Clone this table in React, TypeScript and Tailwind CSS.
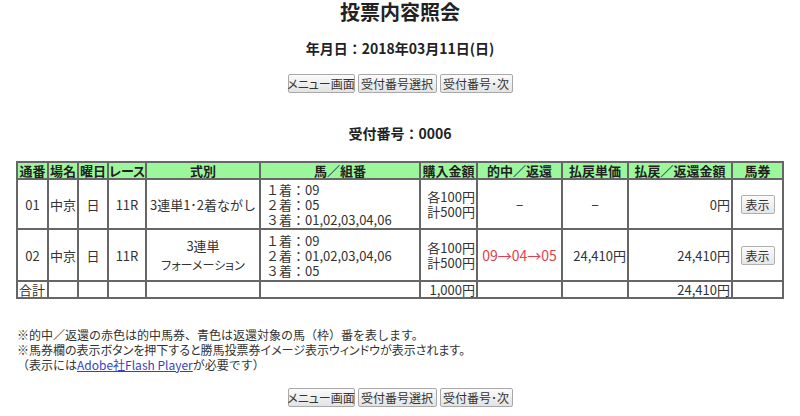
import React from "react";

const font = { fontFamily: '"Noto Sans CJK JP", "Noto Sans", sans-serif' };

function Btn({ children, w }: { children: React.ReactNode; w: string }) {
  return (
    <button
      className={`${w} h-[19px] border border-[#a9a9a9] rounded-[2px] bg-gradient-to-b from-[#fbfbfb] to-[#e3e3e3] text-[12px] leading-[17px] text-[#333] px-0 flex items-center justify-center whitespace-nowrap [font-feature-settings:'palt']`}
    >
      {children}
    </button>
  );
}

function BtnRow() {
  return (
    <div className="flex justify-center gap-[3px]">
      <Btn w="w-[67px]">メニュー画面</Btn>
      <Btn w="w-[79px]">受付番号選択</Btn>
      <Btn w="w-[73px]">受付番号･次</Btn>
    </div>
  );
}

const th = "border border-[#666] bg-[#9cf79c] text-[13px] font-bold leading-[15px] text-[#222] p-0 text-center whitespace-nowrap";
const td = "border border-[#666] text-[13px] leading-[15px] text-[#333] align-middle whitespace-nowrap";

function ShowBtn() {
  return (
    <button className="w-[34px] h-[19px] mx-auto border border-[#b0b0b0] rounded-[2px] bg-gradient-to-b from-[#fbfbfb] to-[#e6e6e6] text-[12px] leading-[17px] text-[#333] flex items-center justify-center">
      表示
    </button>
  );
}

export default function App() {
  return (
    <div className="w-[800px] h-[416px] bg-white text-[#222] overflow-hidden" style={font}>
      <div className="text-center text-[20px] font-bold leading-[24px] pt-0">投票内容照会</div>
      <div className="text-center text-[14px] font-bold leading-[18px] mt-[15px]">年月日：2018年03月11日(日)</div>
      <div className="mt-[17px]">
        <BtnRow />
      </div>
      <div className="text-center text-[14px] font-bold leading-[18px] mt-[31px]">受付番号：0006</div>
      <table className="mx-auto mt-[19px] w-[766px] table-fixed border-separate border-spacing-0 border border-[#666]">
        <colgroup>
          <col className="w-[31px]" />
          <col className="w-[30px]" />
          <col className="w-[30px]" />
          <col className="w-[38px]" />
          <col className="w-[114px]" />
          <col className="w-[160px]" />
          <col className="w-[57px]" />
          <col className="w-[85px]" />
          <col className="w-[66px]" />
          <col className="w-[104px]" />
          <col className="w-[51px]" />
        </colgroup>
        <thead>
          <tr className="h-[17px]">
            <th className={th}>通番</th>
            <th className={th}>場名</th>
            <th className={th}>曜日</th>
            <th className={`${th} [font-feature-settings:'palt']`}>レース</th>
            <th className={th}>式別</th>
            <th className={th}>馬／組番</th>
            <th className={th}>購入金額</th>
            <th className={th}>的中／返還</th>
            <th className={th}>払戻単価</th>
            <th className={th}>払戻／返還金額</th>
            <th className={th}>馬券</th>
          </tr>
        </thead>
        <tbody>
          <tr className="h-[50px]">
            <td className={`${td} text-center`}>01</td>
            <td className={`${td} pl-[1px]`}>中京</td>
            <td className={`${td} text-center`}>日</td>
            <td className={`${td} text-center`}>11R</td>
            <td className={`${td} text-center`}>3連単1･2着ながし</td>
            <td className={`${td} pl-[5px]`}>
              <div>１着：09</div>
              <div>２着：05</div>
              <div>３着：01,02,03,04,06</div>
            </td>
            <td className={`${td} text-right pr-[1px]`}>
              <div>各100円</div>
              <div>計500円</div>
            </td>
            <td className={`${td} text-center`}>−</td>
            <td className={`${td} text-center`}>−</td>
            <td className={`${td} text-right pr-[1px]`}>0円</td>
            <td className={`${td} text-center`}>
              <ShowBtn />
            </td>
          </tr>
          <tr className="h-[52px]">
            <td className={`${td} text-center`}>02</td>
            <td className={`${td} pl-[1px]`}>中京</td>
            <td className={`${td} text-center`}>日</td>
            <td className={`${td} text-center`}>11R</td>
            <td className={`${td} text-center`}>
              <div className="leading-[19px]">3連単</div>
              <div className="leading-[19px] text-[12px] [font-feature-settings:'palt']">フォーメーション</div>
            </td>
            <td className={`${td} pl-[5px]`}>
              <div>１着：09</div>
              <div>２着：01,02,03,04,06</div>
              <div>３着：05</div>
            </td>
            <td className={`${td} text-right pr-[1px]`}>
              <div>各100円</div>
              <div>計500円</div>
            </td>
            <td className={`${td} text-center text-[14px] text-[#e23e4c]`}>09→04→05</td>
            <td className={`${td} text-right pr-[1px] text-[13.5px]`}>24,410円</td>
            <td className={`${td} text-right pr-[1px] text-[13.5px]`}>24,410円</td>
            <td className={`${td} text-center`}>
              <ShowBtn />
            </td>
          </tr>
          <tr className="h-[16px]">
            <td className={`${td} pl-[1px]`}>合計</td>
            <td className={td}></td>
            <td className={td}></td>
            <td className={td}></td>
            <td className={td}></td>
            <td className={td}></td>
            <td className={`${td} text-right pr-[1px]`}>1,000円</td>
            <td className={td}></td>
            <td className={td}></td>
            <td className={`${td} text-right pr-[1px] text-[13.5px]`}>24,410円</td>
            <td className={td}></td>
          </tr>
        </tbody>
      </table>
      <div className="ml-[17px] mt-[28px] text-[12px] leading-[15px] text-[#333]">
        <div>※的中／返還の赤色は的中馬券、青色は返還対象の馬（枠）番を表します。</div>
        <div className="[font-feature-settings:'palt']">※馬券欄の表示ボタンを押下すると勝馬投票券イメージ表示ウィンドウが表示されます。</div>
        <div>
          （表示には<span className="text-[#3a3fbf] underline">Adobe社Flash Player</span>が必要です）
        </div>
      </div>
      <div className="mt-[16px]">
        <BtnRow />
      </div>
    </div>
  );
}
